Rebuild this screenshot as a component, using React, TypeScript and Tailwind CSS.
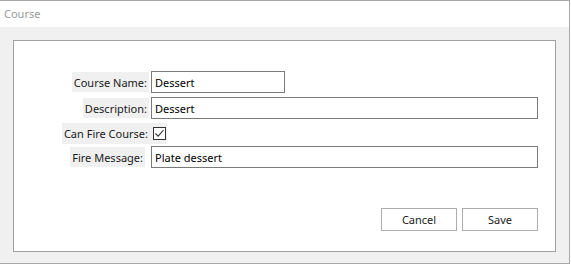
import React from "react";

const font = { fontFamily: "'Segoe UI', 'Noto Sans', 'Open Sans', sans-serif" };

function Label({ text, mr }: { text: string; mr?: string }) {
  return (
    <div className="w-[135px] flex justify-end">
      <div className={`bg-[#f0f0f0] h-[20px] flex items-center justify-end px-[2px] ${mr ?? ""}`}>
        <span className="text-[11px] text-[#1a1a1a] leading-none whitespace-nowrap">{text}</span>
      </div>
    </div>
  );
}

function Input({ value, w }: { value: string; w: string }) {
  return (
    <div className={`h-[22px] border border-[#7a7a7a] bg-white flex items-center pl-[3px] ${w}`}>
      <span className="text-[11px] text-black leading-none whitespace-nowrap">{value}</span>
    </div>
  );
}

export default function App() {
  return (
    <div className="w-[571px] h-[264px] bg-white" style={font}>
      <div className="w-[570px] h-[264px] border-t border-r border-b border-[#a8a8a8] flex flex-col">
        <div className="h-[26px] bg-white flex items-center pl-[4px]">
          <span className="text-[11px] text-[#999999] whitespace-nowrap">Course</span>
        </div>
        <div className="flex-1 bg-[#f0f0f0] pt-[13px] pl-[13px] pr-[13px] pb-[11px] flex">
          <div className="flex-1 bg-white border border-[#a0a0a0] flex flex-col pt-[30px] pr-[17px]">
            <div className="flex items-center h-[22px] gap-[2px]">
              <Label text="Course Name:" />
              <Input value="Dessert" w="w-[134px]" />
            </div>
            <div className="flex items-center h-[22px] gap-[2px] mt-[4px]">
              <Label text="Description:" />
              <Input value="Dessert" w="flex-1" />
            </div>
            <div className="flex items-center h-[21px] mt-[4px]">
              <div className="w-[153px] flex justify-end">
                <div className="bg-[#f0f0f0] h-[21px] flex items-center pl-[2px] pr-[1px]">
                  <span className="text-[11px] text-[#1a1a1a] leading-none whitespace-nowrap">Can Fire Course:</span>
                  <div className="ml-[5px] w-[13px] h-[13px] border border-[#333333] bg-white flex items-center justify-center">
                    <svg width="11" height="11" viewBox="0 0 11 11">
                      <path d="M1.5 5.5 L4.2 8.2 L9.5 2" fill="none" stroke="#333333" strokeWidth="1.1" />
                    </svg>
                  </div>
                </div>
              </div>
            </div>
            <div className="flex items-center h-[22px] gap-[2px] mt-[2px]">
              <Label text="Fire Message:" mr="mr-[4px]" />
              <Input value="Plate dessert" w="flex-1" />
            </div>
            <div className="flex justify-end gap-[5px] mt-[40px]">
              <div className="w-[76px] h-[23px] border border-[#adadad] bg-white flex items-center justify-center">
                <span className="text-[11px] text-[#1a1a1a] leading-none">Cancel</span>
              </div>
              <div className="w-[76px] h-[23px] border border-[#adadad] bg-white flex items-center justify-center">
                <span className="text-[11px] text-[#1a1a1a] leading-none">Save</span>
              </div>
            </div>
          </div>
        </div>
      </div>
    </div>
  );
}
